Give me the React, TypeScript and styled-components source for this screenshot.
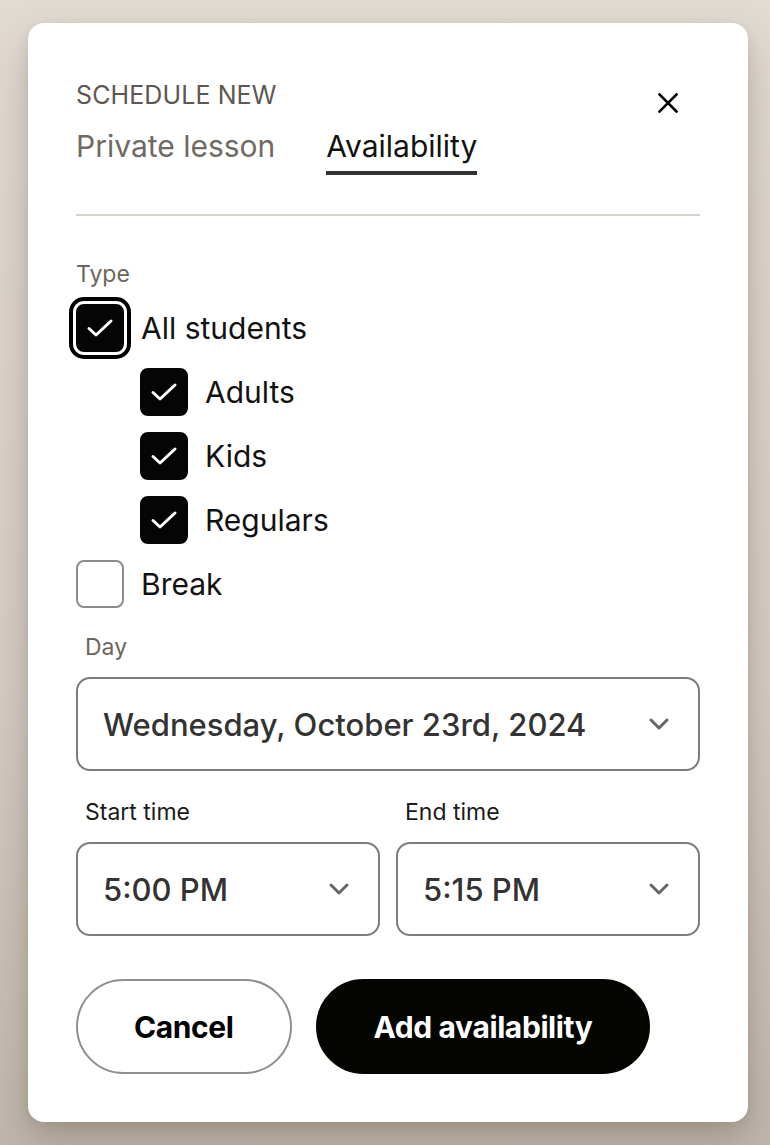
import React from "react";
import styled, { createGlobalStyle } from "styled-components";

const Global = createGlobalStyle`
  html, body { margin: 0; padding: 0; }
  body {
    width: 770px;
    height: 1145px;
    overflow: hidden;
    font-family: Inter, "Noto Sans", "Liberation Sans", sans-serif;
    background: linear-gradient(180deg, #e2dbd3 0%, #d4ccc4 60%, #bfb6ad 100%);
  }
  * { box-sizing: border-box; }
`;

const Page = styled.div`
  padding: 23px 22px 0 28px;
`;

const Card = styled.div`
  width: 720px;
  height: 1099px;
  background: #fff;
  border-radius: 16px;
  padding: 56px 48px 0 48px;
  box-shadow: 0 20px 40px rgba(80, 65, 50, 0.25), 0 4px 12px rgba(80, 65, 50, 0.12);
  display: flex;
  flex-direction: column;
`;

const Header = styled.div`
  display: flex;
  justify-content: space-between;
  align-items: flex-start;
`;

const HeaderText = styled.div`
  display: flex;
  flex-direction: column;
`;

const Eyebrow = styled.div`
  font-size: 25px;
  line-height: 32px;
  color: #5d5852;
  letter-spacing: 0.1px;
`;

const Tabs = styled.div`
  display: flex;
  gap: 51px;
  margin-top: 15px;
`;

const Tab = styled.div<{ $active?: boolean }>`
  font-size: 30px;
  line-height: 40px;
  padding-bottom: 5px;
  color: ${(p) => (p.$active ? "#111" : "#6f6a63")};
  border-bottom: 4px solid ${(p) => (p.$active ? "#333" : "transparent")};
`;

const CloseButton = styled.button`
  border: none;
  background: none;
  padding: 0;
  margin-top: 2px;
  margin-right: 10px;
  width: 44px;
  height: 44px;
  display: flex;
  align-items: center;
  justify-content: center;
  cursor: pointer;
`;

const Divider = styled.div`
  height: 2px;
  background: #d6d1ca;
  margin-top: 39px;
`;

const FieldLabel = styled.div<{ $muted?: boolean; $indent?: boolean }>`
  font-size: 23px;
  line-height: 28px;
  color: ${(p) => (p.$muted ? "#6b655e" : "#1a1a1a")};
  padding-left: ${(p) => (p.$indent ? "9px" : "0")};
`;

const TypeSection = styled.div`
  margin-top: 44px;
  display: flex;
  flex-direction: column;
  gap: 16px;
`;

const CheckList = styled.div`
  display: flex;
  flex-direction: column;
  gap: 16px;
`;

const CheckRow = styled.label<{ $indent?: boolean }>`
  display: flex;
  align-items: center;
  gap: 17px;
  height: 48px;
  padding-left: ${(p) => (p.$indent ? "64px" : "0")};
  font-size: 30px;
  color: #111;
  cursor: pointer;
`;

const Box = styled.span<{ $checked?: boolean; $focused?: boolean }>`
  width: 48px;
  height: 48px;
  flex: none;
  border-radius: 8px;
  display: flex;
  align-items: center;
  justify-content: center;
  background: ${(p) => (p.$checked ? "#050505" : "#fff")};
  border: 2px solid ${(p) => (p.$checked ? "#050505" : "#8d8c88")};
  box-shadow: ${(p) => (p.$focused ? "0 0 0 3px #fff, 0 0 0 7px #000" : "none")};
`;

const DaySection = styled.div`
  margin-top: 25px;
  display: flex;
  flex-direction: column;
  gap: 16px;
`;

const Select = styled.div`
  height: 94px;
  border: 2px solid #7f7c78;
  border-radius: 14px;
  display: flex;
  align-items: center;
  justify-content: space-between;
  padding: 0 28px 0 25px;
  font-size: 31px;
  font-weight: 500;
  color: #333;
`;

const TimeGrid = styled.div`
  margin-top: 27px;
  display: grid;
  grid-template-columns: 1fr 1fr;
  column-gap: 16px;
`;

const TimeField = styled.div`
  display: flex;
  flex-direction: column;
  gap: 16px;
`;

const Actions = styled.div`
  margin-top: 43px;
  display: flex;
  gap: 24px;
`;

const Button = styled.button<{ $primary?: boolean }>`
  height: 95px;
  padding: 0 56px;
  border-radius: 48px;
  font-family: inherit;
  font-size: 30px;
  font-weight: 700;
  letter-spacing: -0.4px;
  cursor: pointer;
  background: ${(p) => (p.$primary ? "#050500" : "#fff")};
  color: ${(p) => (p.$primary ? "#fff" : "#000")};
  border: 2px solid ${(p) => (p.$primary ? "#050500" : "#8f8f8b")};
`;

const Check = () => (
  <svg width="28" height="20" viewBox="0 0 28 20" fill="none">
    <path d="M3 10.5 L10 17 L25 3" stroke="#fff" strokeWidth="3" strokeLinecap="round" strokeLinejoin="round" />
  </svg>
);

const Chevron = () => (
  <svg width="22" height="14" viewBox="0 0 22 14" fill="none">
    <path d="M3 3 L11 11 L19 3" stroke="#666" strokeWidth="3" strokeLinecap="round" strokeLinejoin="round" />
  </svg>
);

const CloseIcon = () => (
  <svg width="20" height="20" viewBox="0 0 20 20" fill="none">
    <path d="M1.5 1.5 L18.5 18.5 M18.5 1.5 L1.5 18.5" stroke="#000" strokeWidth="2.6" strokeLinecap="square" />
  </svg>
);

const items = [
  { label: "All students", checked: true, focused: true, indent: false },
  { label: "Adults", checked: true, indent: true },
  { label: "Kids", checked: true, indent: true },
  { label: "Regulars", checked: true, indent: true },
  { label: "Break", checked: false, indent: false },
];

export default function App() {
  return (
    <>
      <Global />
      <Page>
        <Card>
          <Header>
            <HeaderText>
              <Eyebrow>SCHEDULE NEW</Eyebrow>
              <Tabs>
                <Tab>Private lesson</Tab>
                <Tab $active>Availability</Tab>
              </Tabs>
            </HeaderText>
            <CloseButton aria-label="Close">
              <CloseIcon />
            </CloseButton>
          </Header>
          <Divider />
          <TypeSection>
            <FieldLabel $muted>Type</FieldLabel>
            <CheckList>
              {items.map((it) => (
                <CheckRow key={it.label} $indent={it.indent}>
                  <Box $checked={it.checked} $focused={it.focused}>
                    {it.checked && <Check />}
                  </Box>
                  {it.label}
                </CheckRow>
              ))}
            </CheckList>
          </TypeSection>
          <DaySection>
            <FieldLabel $muted $indent>Day</FieldLabel>
            <Select>
              <span>Wednesday, October 23rd, 2024</span>
              <Chevron />
            </Select>
          </DaySection>
          <TimeGrid>
            <TimeField>
              <FieldLabel $indent>Start time</FieldLabel>
              <Select>
                <span>5:00 PM</span>
                <Chevron />
              </Select>
            </TimeField>
            <TimeField>
              <FieldLabel $indent>End time</FieldLabel>
              <Select>
                <span>5:15 PM</span>
                <Chevron />
              </Select>
            </TimeField>
          </TimeGrid>
          <Actions>
            <Button>Cancel</Button>
            <Button $primary>Add availability</Button>
          </Actions>
        </Card>
      </Page>
    </>
  );
}
